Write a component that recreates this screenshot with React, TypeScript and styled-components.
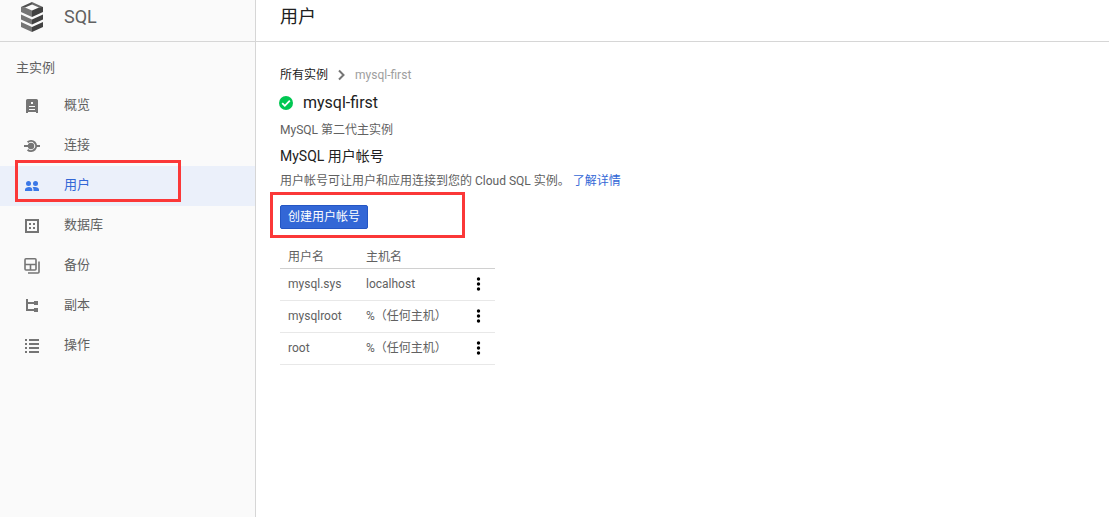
import React from "react";
import styled, { createGlobalStyle, css } from "styled-components";

const GlobalStyle = createGlobalStyle`
  *, *::before, *::after { box-sizing: border-box; }
  body {
    margin: 0;
    background: #fff;
    color: #616161;
    font-family: Roboto, "Noto Sans CJK SC", sans-serif;
    font-size: 12px;
    line-height: 16px;
    font-weight: 400;
  }
  h1, h2, h3, p { margin: 0; font-weight: 400; }
  a { text-decoration: none; }
`;

const Shell = styled.div`
  display: grid;
  grid-template-columns: 256px 1fr;
  min-height: 100vh;
`;

const Sidebar = styled.aside`
  background: #fafafa;
  border-right: 1px solid #d6d6d6;
`;

const TopBar = styled.header`
  display: flex;
  align-items: center;
  height: 42px;
  padding: 0 24px 7px;
  border-bottom: 1px solid #d6d6d6;
`;

const Product = styled(TopBar)`
  gap: 20px;
  padding-left: 20px;
`;

const ProductName = styled.span`
  color: #616161;
  font-size: 18px;
  line-height: 24px;
`;

const PageTitle = styled.h1`
  color: #212121;
  font-size: 18px;
  line-height: 24px;
`;

const SectionLabel = styled.h2`
  padding: 16px 16px 8px;
  font-size: 13px;
  line-height: 20px;
`;

const NavList = styled.ul`
  margin: 0;
  padding: 0;
  list-style: none;
`;

const NavItem = styled.li`
  position: relative;
`;

const NavLink = styled.a<{ $active?: boolean }>`
  display: flex;
  align-items: center;
  gap: 20px;
  height: 40px;
  padding: 0 20px;
  color: #616161;
  font-size: 13px;
  line-height: 20px;

  svg { color: #757575; }

  span { padding-bottom: 2px; }

  ${(p) =>
    p.$active &&
    css`
      background: #ebf0fa;
      color: #3367d6;
      svg { color: #3b78e7; }
    `}
`;

const Highlight = styled.div<{ $area: "nav" | "action" }>`
  position: absolute;
  border: 3px solid #fb3838;
  pointer-events: none;
  z-index: 1;
  ${(p) =>
    p.$area === "nav"
      ? css`top: -6px; left: 15px; width: 166px; height: 42px;`
      : css`top: -13px; left: -10px; width: 195px; height: 46px;`}
`;

const Content = styled.main`
  padding: 24px;
`;

const Breadcrumb = styled.nav`
  display: flex;
  align-items: center;
  gap: 8px;
  height: 18px;
  color: #9e9e9e;
  a { color: #212121; }
`;

const InstanceTitle = styled.h2`
  display: flex;
  align-items: center;
  gap: 9px;
  margin-top: 7px;
  color: #212121;
  font-size: 16px;
  line-height: 24px;
  svg { margin-left: -2px; }
`;

const Text = styled.p`
  margin-top: 7px;
`;

const SubHeading = styled.h3`
  margin-top: 8px;
  color: #212121;
  font-size: 14px;
  line-height: 20px;
`;

const MoreLink = styled.a`
  margin-left: 3px;
  color: #3367d6;
`;

const Action = styled.div`
  position: relative;
  display: flex;
  margin-top: 16px;
`;

const PrimaryButton = styled.button`
  height: 24px;
  padding: 0 7px 1px;
  border: 1px solid #2456c4;
  border-radius: 2px;
  background: #3367d6;
  color: #fff;
  font: inherit;
`;

const Table = styled.table`
  width: 215px;
  margin-top: 16px;
  border-collapse: separate;
  border-spacing: 0;
  table-layout: fixed;

  th, td {
    height: 32px;
    padding: 0 0 1px 8px;
    border-bottom: 1px solid #e8e8e8;
    text-align: left;
    font-weight: 400;
    white-space: nowrap;
  }
  th { height: 24px; padding-bottom: 0; border-bottom-color: #d0d0d0; }
`;

const MenuButton = styled.button`
  display: block;
  padding: 0;
  border: 0;
  background: none;
  color: #000;
  svg { display: block; }
`;

const SqlLogo = () => (
  <svg width="24" height="34" viewBox="0 0 24 34" aria-hidden="true">
    <path fill="#505050" d="M12 2L1 7v1l4-.5 7-3z" />
    <path fill="#6a6a6a" d="M12 2l11 5v1l-4-.5-7-3z" />
    <path fill="#757575" d="M1 7l4 .5 7 3V17L1 12zM1 14.500l11 5v5l-11-5zM1 22l11 5v5L1 27z" />
    <path fill="#424242" d="M23 7l-4 .5-7 3V17l11-5zM23 14.500l-11 5v5l11-5zM23 22l-11 5v5l11-5z" />
  </svg>
);

const Icon = ({ children }: { children: React.ReactNode }) => (
  <svg width="24" height="24" viewBox="0 0 24 24" fill="currentColor" aria-hidden="true">
    {children}
  </svg>
);

const OverviewIcon = () => (
  <Icon>
    <path fillRule="evenodd" d="M7.500 5h9A1.500 1.500 0 0 1 18 6.500V19h-2v-1H8v1H6V6.500A1.500 1.500 0 0 1 7.500 5zM11 8v2h2V8zM9 12v1h6v-1zM9 15v1h6v-1z" />
  </Icon>
);
const ConnectIcon = () => (
  <Icon>
    <circle cx="11" cy="12" r="3.200" />
    <path d="M4 11h5v2H4zM16 11h4v2h-4z" />
    <path d="M7.600 8.200A5.100 5.100 0 1 1 7.600 15.800" fill="none" stroke="currentColor" strokeWidth="2" />
  </Icon>
);
const UsersIcon = () => (
  <Icon>
    <circle cx="8.500" cy="9.500" r="2.500" />
    <circle cx="15.500" cy="9.500" r="2.500" />
    <path d="M5 17v-1.500C5 14 7 13 9 13s3.300 1 3.300 2.500V17zM13.500 17v-1.500c0-.9-.4-1.700-1-2.200.8-.2 1.600-.3 2.500-.3 2.200 0 4 1 4 2.500V17z" />
  </Icon>
);
const DatabaseIcon = () => (
  <Icon>
    <path fillRule="evenodd" d="M5 5h14v14H5zM7 7v10h10V7z" />
    <path d="M9 9h2v2H9zM13 9h2v2h-2zM9 13h2v2H9zM13 13h2v2h-2z" />
  </Icon>
);
const BackupIcon = () => (
  <Icon>
    <path d="M6 4.800h9a1 1 0 0 1 1 1V15a1 1 0 0 1-1 1H6a1 1 0 0 1-1-1V5.800a1 1 0 0 1 1-1zM5 10.500h11M10.500 10.500V16M19 7.500V18a1 1 0 0 1-1 1H8" fill="none" stroke="currentColor" strokeWidth="1.600" />
  </Icon>
);
const ReplicaIcon = () => (
  <Icon>
    <path d="M6 5h2v3h6V7h4v4h-4v-1H8v5h6v-1h4v4h-4v-1H6z" />
  </Icon>
);
const OperationsIcon = () => (
  <Icon>
    <path d="M5 5h2v2H5zM5 9h2v2H5zM5 13h2v2H5zM5 17h2v2H5zM9 5h10v2H9zM9 9h10v2H9zM9 13h10v2H9zM9 17h10v2H9z" />
  </Icon>
);

const navItems = [
  { label: "概览", icon: OverviewIcon },
  { label: "连接", icon: ConnectIcon },
  { label: "用户", icon: UsersIcon, active: true },
  { label: "数据库", icon: DatabaseIcon },
  { label: "备份", icon: BackupIcon },
  { label: "副本", icon: ReplicaIcon },
  { label: "操作", icon: OperationsIcon },
];

const users = [
  { name: "mysql.sys", host: "localhost" },
  { name: "mysqlroot", host: "%（任何主机）" },
  { name: "root", host: "%（任何主机）" },
];

export default function App() {
  return (
    <>
      <GlobalStyle />
      <Shell>
        <Sidebar>
          <Product>
            <SqlLogo />
            <ProductName>SQL</ProductName>
          </Product>
          <SectionLabel>主实例</SectionLabel>
          <NavList>
            {navItems.map(({ label, icon: ItemIcon, active }) => (
              <NavItem key={label}>
                <NavLink href="#" $active={active} aria-current={active ? "page" : undefined}>
                  <ItemIcon />
                  <span>{label}</span>
                </NavLink>
                {active && <Highlight $area="nav" />}
              </NavItem>
            ))}
          </NavList>
        </Sidebar>
        <div>
          <TopBar>
            <PageTitle>用户</PageTitle>
          </TopBar>
          <Content>
            <Breadcrumb>
              <a href="#">所有实例</a>
              <svg width="11" height="12" viewBox="0 0 11 12" aria-hidden="true">
                <path d="M3 1.500L7.500 6 3 10.500" fill="none" stroke="#757575" strokeWidth="2" />
              </svg>
              <span>mysql-first</span>
            </Breadcrumb>
            <InstanceTitle>
              <svg width="16" height="16" viewBox="0 0 16 16" aria-hidden="true">
                <circle cx="8" cy="8" r="7" fill="#00c752" />
                <path d="M4.200 8.200l2.600 2.600 5-5.200" fill="none" stroke="#fff" strokeWidth="1.800" />
              </svg>
              mysql-first
            </InstanceTitle>
            <Text>MySQL 第二代主实例</Text>
            <SubHeading>MySQL 用户帐号</SubHeading>
            <Text>
              用户帐号可让用户和应用连接到您的 Cloud SQL 实例。
              <MoreLink href="#">了解详情</MoreLink>
            </Text>
            <Action>
              <PrimaryButton type="button">创建用户帐号</PrimaryButton>
              <Highlight $area="action" />
            </Action>
            <Table>
              <colgroup>
                <col width="78" />
                <col width="104" />
                <col />
              </colgroup>
              <thead>
                <tr>
                  <th scope="col">用户名</th>
                  <th scope="col">主机名</th>
                  <th aria-label="操作" />
                </tr>
              </thead>
              <tbody>
                {users.map((user) => (
                  <tr key={user.name}>
                    <td>{user.name}</td>
                    <td>{user.host}</td>
                    <td>
                      <MenuButton type="button" aria-label={`${user.name} 菜单`}>
                        <svg width="16" height="16" viewBox="0 0 16 16" fill="currentColor">
                          <circle cx="8.500" cy="3" r="1.700" />
                          <circle cx="8.500" cy="8" r="1.700" />
                          <circle cx="8.500" cy="13" r="1.700" />
                        </svg>
                      </MenuButton>
                    </td>
                  </tr>
                ))}
              </tbody>
            </Table>
          </Content>
        </div>
      </Shell>
    </>
  );
}
